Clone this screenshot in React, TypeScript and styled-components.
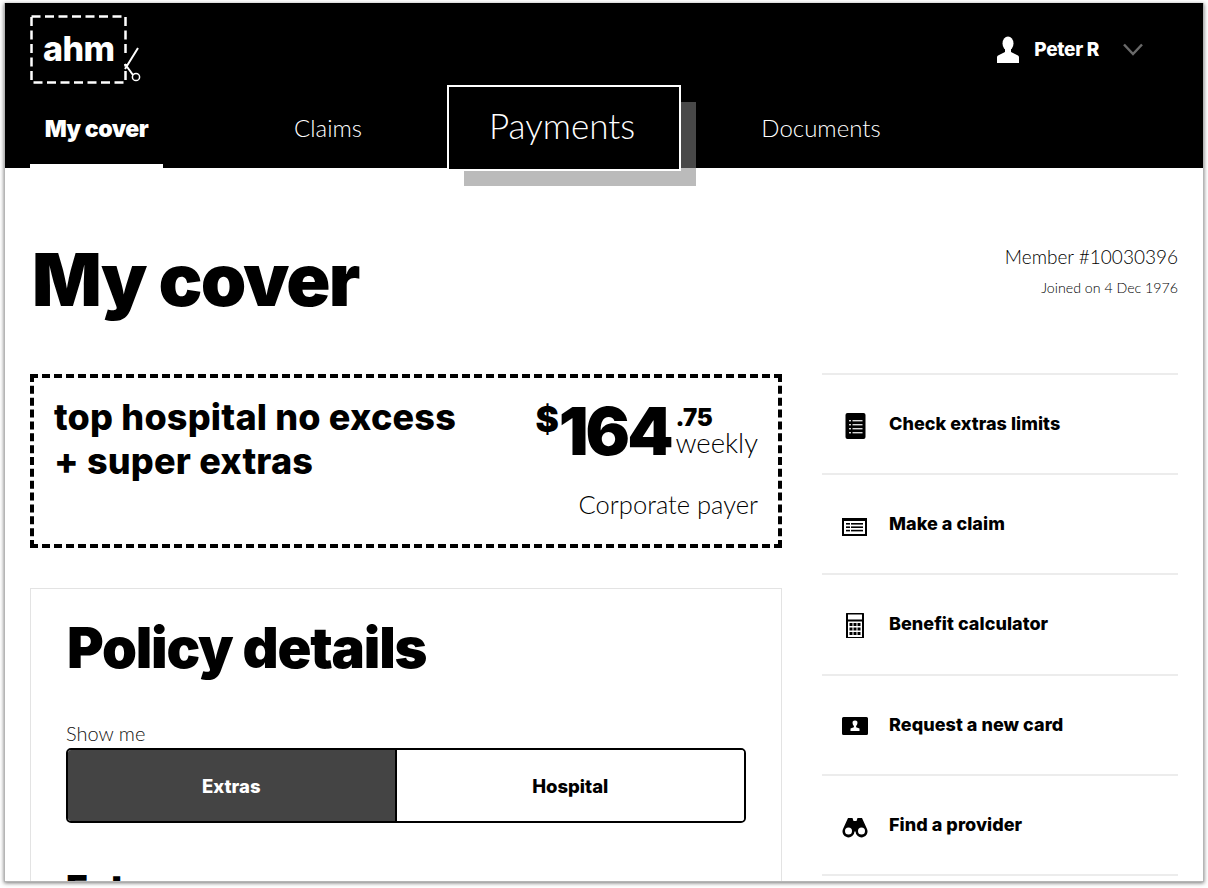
import React from 'react';
import styled, { createGlobalStyle } from 'styled-components';

const HEAVY = '"Inter", "Liberation Sans", sans-serif';

const GlobalStyle = createGlobalStyle`
  html, body {
    margin: 0;
    padding: 0;
    background: #fff;
    height: 888px;
    overflow: hidden;
    font-family: "Lato", "Liberation Sans", sans-serif;
    color: #000;
  }
  * { box-sizing: border-box; }
`;

const Frame = styled.div`
  margin: 3px 0 0 4px;
  width: 1200px;
  height: 879px;
  background: #fff;
  border: solid #b5b5b5;
  border-width: 0 1px 1px 1px;
  box-shadow: 0 1px 4px rgba(0, 0, 0, 0.55);
  overflow: hidden;
`;

const Header = styled.header`
  background: #000;
  height: 165px;
  padding: 0 25px;
  display: flex;
  flex-direction: column;
  justify-content: space-between;
`;

const TopRow = styled.div`
  display: flex;
  justify-content: space-between;
  padding-top: 12px;
`;

const Logo = styled.svg`
  display: block;
  width: 114px;
  height: 72px;
`;

const UserMenu = styled.div`
  display: flex;
  align-items: center;
  height: 50px;
  margin: 9px 35px 0 0;
  color: #fff;
  font-family: ${HEAVY};
  font-weight: 800;
  font-size: 19px;
  letter-spacing: -0.3px;
`;

const UserName = styled.span`
  margin: 0 24px 0 15px;
`;

const Nav = styled.nav`
  display: flex;
  align-items: flex-end;
  height: 86px;
  margin-top: -17px;
`;

const Tab = styled.a<{ $active?: boolean; $width: number; $gap: number }>`
  display: flex;
  align-items: center;
  justify-content: center;
  width: ${p => p.$width}px;
  margin-right: ${p => p.$gap}px;
  height: 60px;
  color: #fff;
  font-family: ${p => (p.$active ? HEAVY : 'inherit')};
  font-size: ${p => (p.$active ? 23 : 24)}px;
  font-weight: ${p => (p.$active ? 900 : 300)};
  letter-spacing: ${p => (p.$active ? -0.5 : 0)}px;
  padding-bottom: ${p => (p.$active ? 15 : 18)}px;
  border-bottom: 4px solid ${p => (p.$active ? '#fff' : 'transparent')};
`;

const CalloutTab = styled.a`
  display: flex;
  align-items: center;
  justify-content: center;
  width: 234px;
  height: 86px;
  margin: 0 70px 0 0;
  transform: translateY(3px);
  position: relative;
  z-index: 2;
  background: #000;
  color: #fff;
  font-size: 35px;
  font-weight: 300;
  border: 2px solid #fff;
  padding: 0 4px 6px 0;
  box-shadow: 16px 16px 0 -1px rgba(131, 131, 131, 0.55);
`;

const Main = styled.main`
  padding: 0 25px;
`;

const TitleRow = styled.div`
  display: flex;
  justify-content: space-between;
  align-items: flex-start;
  height: 205px;
`;

const PageTitle = styled.h1`
  margin: 68px 0 0 2px;
  font-family: ${HEAVY};
  font-size: 73px;
  line-height: 88px;
  font-weight: 900;
  letter-spacing: -1.8px;
`;

const MemberInfo = styled.div`
  margin-top: 75px;
  text-align: right;
  font-weight: 300;
  color: #000;
`;

const MemberNumber = styled.div`
  font-size: 19px;
  line-height: 28px;
`;

const Joined = styled.div`
  font-size: 14.200px;
  line-height: 34px;
`;

const Columns = styled.div`
  display: flex;
  justify-content: space-between;
  align-items: flex-start;
`;

const LeftColumn = styled.div`
  width: 752px;
  margin-top: 1px;
`;

const Promo = styled.section`
  height: 174px;
  border: 4px dashed #000;
  padding: 17px 20px 0;
  display: flex;
  justify-content: space-between;
`;

const ProductName = styled.h2`
  margin: 0;
  font-family: ${HEAVY};
  font-size: 36px;
  line-height: 44px;
  font-weight: 800;
  letter-spacing: 0.2px;
`;

const PriceBlock = styled.div`
  display: flex;
  flex-direction: column;
  align-items: flex-end;
`;

const Price = styled.div`
  display: flex;
  align-items: flex-start;
  height: 70px;
  font-family: ${HEAVY};
`;

const Dollar = styled.span`
  font-size: 35px;
  line-height: 48px;
  font-weight: 900;
`;

const Dollars = styled.span`
  font-size: 66px;
  line-height: 72px;
  font-weight: 900;
  letter-spacing: -3px;
  margin-right: 5px;
`;

const CentsStack = styled.span`
  display: flex;
  flex-direction: column;
  align-items: flex-start;
  padding-top: 10px;
`;

const Cents = styled.span`
  font-size: 24px;
  line-height: 25px;
  font-weight: 900;
  letter-spacing: -0.5px;
`;

const Weekly = styled.span`
  font-family: "Lato", sans-serif;
  font-size: 27.500px;
  line-height: 25px;
  font-weight: 300;
`;

const Payer = styled.div`
  margin-top: 22px;
  font-size: 25.500px;
  line-height: 34px;
  font-weight: 300;
  color: #000;
`;

const Card = styled.section`
  margin-top: 40px;
  height: 400px;
  border: 1px solid #e3e3e3;
  padding: 0 35px;
`;

const CardTitle = styled.h2`
  margin: 27px 0 0 1px;
  font-family: ${HEAVY};
  font-size: 56px;
  line-height: 64px;
  font-weight: 900;
  letter-spacing: -1.2px;
`;

const ShowMe = styled.div`
  margin-top: 39px;
  padding-bottom: 1px;
  font-size: 20px;
  line-height: 28px;
  font-weight: 300;
  color: #111;
`;

const Toggle = styled.div`
  display: flex;
  height: 75px;
  border: 2px solid #000;
  border-radius: 5px;
  overflow: hidden;
`;

const ToggleOption = styled.div<{ $active?: boolean; $width: string }>`
  width: ${p => p.$width};
  display: flex;
  align-items: center;
  justify-content: center;
  font-family: ${HEAVY};
  font-size: 18.500px;
  font-weight: 800;
  background: ${p => (p.$active ? '#444' : '#fff')};
  color: ${p => (p.$active ? '#fff' : '#000')};
  border-right: ${p => (p.$active ? '2px solid #000' : '0')};
`;

const SubTitle = styled.h3`
  margin: 43px 0 0;
  font-family: ${HEAVY};
  font-size: 36px;
  line-height: 44px;
  font-weight: 900;
`;

const SideList = styled.ul`
  list-style: none;
  width: 356px;
  margin: 0;
  padding: 0;
  border-top: 2px solid #ececec;
`;

const SideItem = styled.li`
  display: grid;
  grid-template-columns: 67px 1fr;
  align-items: center;
  height: 100.200px;
  padding-bottom: 1px;
  border-bottom: 2px solid #ececec;
  font-family: ${HEAVY};
  font-size: 18px;
  font-weight: 800;
  letter-spacing: 0.05px;
`;

const IconSlot = styled.span`
  display: flex;
  justify-content: center;
  padding: 4px 2px 0 0;
`;

const ICON = { width: 26, height: 26, viewBox: '0 0 26 26', fill: '#000' };

const LimitsIcon = () => (
  <svg {...ICON}>
    <rect x="3.500" y="0" width="20" height="26" rx="2" />
    <g fill="#fff" opacity="0.85">
      <rect x="7" y="7" width="2" height="1.400" />
      <rect x="10.500" y="7" width="10" height="1.400" />
      <rect x="7" y="11" width="2" height="1.400" />
      <rect x="10.500" y="11" width="10" height="1.400" />
      <rect x="7" y="15" width="2" height="1.400" />
      <rect x="10.500" y="15" width="10" height="1.400" />
      <rect x="7" y="19" width="2" height="1.400" />
      <rect x="10.500" y="19" width="10" height="1.400" />
    </g>
  </svg>
);

const ClaimIcon = () => (
  <svg {...ICON}>
    <path fillRule="evenodd" d="M0 5h25v18H0zM2 8v13h21V8z" />
    <rect x="4" y="10" width="4" height="1.600" />
    <rect x="9" y="10" width="12" height="1.600" />
    <rect x="4" y="13.400" width="4" height="1.600" />
    <rect x="9" y="13.400" width="12" height="1.600" />
    <rect x="4" y="16.800" width="4" height="1.600" />
    <rect x="9" y="16.800" width="12" height="1.600" />
  </svg>
);

const CalculatorIcon = () => (
  <svg {...ICON}>
    <path
      fillRule="evenodd"
      d="M4 1a1.500 1.500 0 0 1 1.500-1.500h15A1.500 1.500 0 0 1 22 1v24H4zM6 1.500v5h14v-5zM6 8.500V24h14V8.500z"
    />
    <path d="M7.500 10h3v3h-3zM11.500 10h3v3h-3zM15.500 10h3v3h-3zM7.500 14.500h3v3h-3zM11.500 14.500h3v3h-3zM15.500 14.500h3v3h-3zM7.500 19h3v3h-3zM11.500 19h3v3h-3zM15.500 19h3v3h-3z" />
  </svg>
);

const CardIcon = () => (
  <svg {...ICON}>
    <path
      fillRule="evenodd"
      d="M1.500 4h23A1.500 1.500 0 0 1 26 5.500v15a1.500 1.500 0 0 1-1.500 1.500h-23A1.500 1.500 0 0 1 0 20.500v-15A1.500 1.500 0 0 1 1.500 4zM13 7.500a2.400 2.400 0 0 0-2.400 2.800c.2 1.300.8 2.200 1.300 2.700v1.200l-3.400 1.400V18h9v-2.400l-3.400-1.400V13c.5-.5 1.100-1.400 1.300-2.700A2.400 2.400 0 0 0 13 7.500z"
    />
  </svg>
);

const BinocularsIcon = () => (
  <svg {...ICON}>
    <path
      fillRule="evenodd"
      d="M6 5h4.500l1 3h3l1-3H20l5 11a6 6 0 1 1-11.500 2.500h-1A6 6 0 1 1 1 16zM6.500 14.500a3.500 3.500 0 1 0 0 7 3.500 3.500 0 0 0 0-7zM19.500 14.500a3.500 3.500 0 1 0 0 7 3.500 3.500 0 0 0 0-7z"
    />
  </svg>
);

const LogoMark = () => (
  <Logo viewBox="0 0 114 72">
    <rect x="1.500" y="1.500" width="94" height="66" fill="none" stroke="#fff" strokeWidth="2.500" strokeDasharray="9 4.500" />
    <rect x="92" y="40" width="8" height="9" fill="#000" />
    <text x="13" y="46" fill="#fff" fontFamily="Inter, sans-serif" fontWeight="800" fontSize="34" letterSpacing="-0.5">ahm</text>
    <path d="M108 33 L95 54 M95 49 L103 60" stroke="#fff" strokeWidth="2" fill="none" />
    <circle cx="106" cy="62" r="3.600" fill="#000" stroke="#fff" strokeWidth="1.500" />
  </Logo>
);

const UserIcon = () => (
  <svg width="22" height="27" viewBox="0 0 22 27" fill="#fff">
    <ellipse cx="11" cy="7.500" rx="5.500" ry="7" />
    <path d="M8 13h6v3l7 3.500a2 2 0 0 1 1 1.700V27H0v-5.800a2 2 0 0 1 1-1.700L8 16z" />
  </svg>
);

const Chevron = () => (
  <svg width="20" height="13" viewBox="0 0 20 13" fill="none" stroke="#6a6a6a" strokeWidth="2.500">
    <path d="M1 1.500 10 11 19 1.500" />
  </svg>
);

const sideLinks = [
  { label: 'Check extras limits', icon: <LimitsIcon /> },
  { label: 'Make a claim', icon: <ClaimIcon /> },
  { label: 'Benefit calculator', icon: <CalculatorIcon /> },
  { label: 'Request a new card', icon: <CardIcon /> },
  { label: 'Find a provider', icon: <BinocularsIcon /> },
];

export default function App() {
  return (
    <>
      <GlobalStyle />
      <Frame>
        <Header>
          <TopRow>
            <LogoMark />
            <UserMenu>
              <UserIcon />
              <UserName>Peter R</UserName>
              <Chevron />
            </UserMenu>
          </TopRow>
          <Nav>
            <Tab $active $width={133} $gap={115}>My cover</Tab>
            <Tab $width={100} $gap={69}>Claims</Tab>
            <CalloutTab>Payments</CalloutTab>
            <Tab $width={140} $gap={0}>Documents</Tab>
          </Nav>
        </Header>
        <Main>
          <TitleRow>
            <PageTitle>My cover</PageTitle>
            <MemberInfo>
              <MemberNumber>Member #10030396</MemberNumber>
              <Joined>Joined on 4 Dec 1976</Joined>
            </MemberInfo>
          </TitleRow>
          <Columns>
            <LeftColumn>
              <Promo>
                <ProductName>
                  top hospital no excess
                  <br />+ super extras
                </ProductName>
                <PriceBlock>
                  <Price>
                    <Dollar>$</Dollar>
                    <Dollars>164</Dollars>
                    <CentsStack>
                      <Cents>.75</Cents>
                      <Weekly>weekly</Weekly>
                    </CentsStack>
                  </Price>
                  <Payer>Corporate payer</Payer>
                </PriceBlock>
              </Promo>
              <Card>
                <CardTitle>Policy details</CardTitle>
                <ShowMe>Show me</ShowMe>
                <Toggle>
                  <ToggleOption $active $width="48.600%">Extras</ToggleOption>
                  <ToggleOption $width="51.400%">Hospital</ToggleOption>
                </Toggle>
                <SubTitle>Extras</SubTitle>
              </Card>
            </LeftColumn>
            <SideList>
              {sideLinks.map(link => (
                <SideItem key={link.label}>
                  <IconSlot>{link.icon}</IconSlot>
                  {link.label}
                </SideItem>
              ))}
            </SideList>
          </Columns>
        </Main>
      </Frame>
    </>
  );
}
